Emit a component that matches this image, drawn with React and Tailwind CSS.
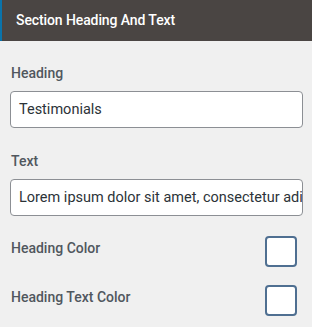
export default function App() {
  return (
    <div className="w-[312px] h-[327px] bg-[#f0f0f0] overflow-hidden" style={{ fontFamily: "Roboto, 'Liberation Sans', sans-serif" }}>
      <div className="h-[41px] bg-[#4a4543] border-l-2 border-[#0a73aa] flex items-center pl-[14px]">
        <span className="text-white text-[14px] font-medium tracking-[-0.1px]">Section Heading And Text</span>
      </div>
      <div className="px-[10px] pt-[24px]">
        <div className="text-[14px] font-medium text-[#50575e] pl-px leading-[16px]">Heading</div>
        <div className="mt-[10px] h-[37px] w-[293px] bg-white border border-[#8c8f94] rounded-[4px] flex items-center pl-[8px] text-[14.5px] text-[#2c3338]">
          Testimonials
        </div>
        <div className="mt-[25px] text-[14px] font-medium text-[#50575e] pl-px leading-[16px]">Text</div>
        <div className="mt-[10px] h-[37px] w-[293px] bg-white border border-[#8c8f94] rounded-[4px] flex items-center pl-[8px] pr-[2px] text-[14.5px] text-[#2c3338] overflow-hidden whitespace-nowrap">
          Lorem ipsum dolor sit amet, consectetur adipiscing elit
        </div>
        <div className="mt-[20px] flex items-center justify-between pr-[5px]">
          <span className="text-[14px] font-medium text-[#50575e] pl-px pb-[6px]">Heading Color</span>
          <div className="w-[32px] h-[31px] bg-white border-2 border-[#4f6f91] rounded-[4px]"></div>
        </div>
        <div className="mt-[18px] flex items-center justify-between pr-[5px]">
          <span className="text-[14px] font-medium text-[#50575e] pl-px pb-[6px]">Heading Text Color</span>
          <div className="w-[32px] h-[31px] bg-white border-2 border-[#4f6f91] rounded-[4px]"></div>
        </div>
      </div>
    </div>
  );
}
